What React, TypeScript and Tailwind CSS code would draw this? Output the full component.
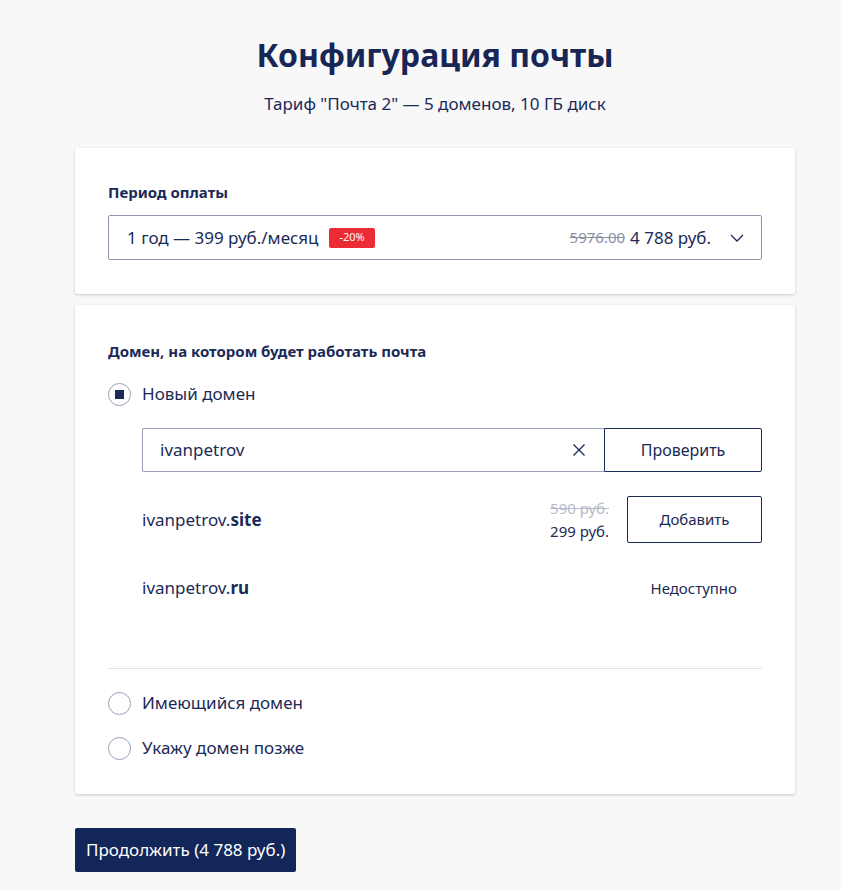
import React, { useState } from 'react';

const font = { fontFamily: '"Noto Sans", "Open Sans", sans-serif' };

function Radio({ checked, label, onClick }: { checked: boolean; label: string; onClick: () => void }) {
  return (
    <button onClick={onClick} className="flex items-center gap-[11px] h-[24px] text-[17px] text-[#1b2a57]">
      <span className="w-[23px] h-[23px] rounded-full border border-[#9aa1b7] bg-white flex items-center justify-center">
        {checked && <span className="w-[9px] h-[9px] bg-[#1b2a57]" />}
      </span>
      <span>{label}</span>
    </button>
  );
}

export default function App() {
  const [mode, setMode] = useState<'new' | 'own' | 'later'>('new');
  const [domain, setDomain] = useState('ivanpetrov');

  return (
    <div style={font} className="min-h-[891px] bg-[#f8f8f9] text-[#1b2a57]">
      <div className="ml-[75px] w-[720px] pt-[33px] pb-[18px]">
        <h1 className="text-center text-[32px] font-bold leading-[44px] text-[#172654]">Конфигурация почты</h1>
        <p className="text-center text-[17px] mt-[15px] leading-[24px]">Тариф "Почта 2" — 5 доменов, 10 ГБ диск</p>

        <div className="mt-[32px] bg-white rounded-[3px] shadow-[0_1px_3px_rgba(20,30,70,0.22)] px-[33px] pt-[34px] pb-[34px]">
          <div className="text-[15px] font-bold leading-[21px]">Период оплаты</div>
          <div className="mt-[12px] h-[45px] border border-[#8e94aa] rounded-[2px] flex items-center pl-[18px] pr-[16px] text-[17px]">
            <span>1 год — 399 руб./месяц</span>
            <span className="ml-[11px] h-[20px] px-[10px] bg-[#ec2c35] text-white text-[11px] rounded-[2px] flex items-center">-20%</span>
            <span className="ml-auto text-[#8a90a3] line-through text-[15px]">5976.00</span>
            <span className="ml-[5px]">4 788 руб.</span>
            <svg className="ml-[18px] w-[16px] h-[16px]" viewBox="0 0 16 16" fill="none" stroke="#1b2a57" strokeWidth="1.3">
              <path d="M2 5l6 6 6-6" />
            </svg>
          </div>
        </div>

        <div className="mt-[11px] bg-white rounded-[3px] shadow-[0_1px_3px_rgba(20,30,70,0.22)] px-[33px] pt-[36px] pb-[34px]">
          <div className="text-[15px] font-bold leading-[21px]">Домен, на котором будет работать почта</div>
          <div className="mt-[20px]">
            <Radio checked={mode === 'new'} label="Новый домен" onClick={() => setMode('new')} />
          </div>

          <div className="ml-[34px]">
            <div className="mt-[22px] flex h-[44px]">
              <div className="flex-1 flex items-center border border-[#9aa1b7] border-r-0 rounded-l-[2px] pl-[17px] pr-[18px]">
                <input
                  value={domain}
                  onChange={(e) => setDomain(e.target.value)}
                  className="flex-1 outline-none text-[17px] text-[#1b2a57] bg-transparent"
                />
                <svg className="w-[14px] h-[14px]" viewBox="0 0 14 14" stroke="#1b2a57" strokeWidth="1.3">
                  <path d="M1.5 1.5l11 11M12.5 1.5l-11 11" />
                </svg>
              </div>
              <button className="w-[158px] border border-[#1b2a57] rounded-r-[2px] text-[16px]">Проверить</button>
            </div>

            <div className="mt-[24px] flex items-center h-[47px]">
              <span className="text-[17px]">ivanpetrov.<b>site</b></span>
              <div className="ml-auto text-right text-[15px] leading-[23px]">
                <div className="text-[#b6bac8] line-through">590 руб.</div>
                <div>299 руб.</div>
              </div>
              <button className="ml-[18px] w-[135px] h-[47px] border border-[#1b2a57] rounded-[2px] text-[15px]">Добавить</button>
            </div>

            <div className="mt-[33px] flex items-center h-[24px]">
              <span className="text-[17px]">ivanpetrov.<b>ru</b></span>
              <span className="ml-auto mr-[25px] text-[15px]">Недоступно</span>
            </div>
          </div>

          <div className="mt-[68px] border-t border-[#e2e4ea]" />

          <div className="mt-[22px] flex flex-col gap-[21px]">
            <Radio checked={mode === 'own'} label="Имеющийся домен" onClick={() => setMode('own')} />
            <Radio checked={mode === 'later'} label="Укажу домен позже" onClick={() => setMode('later')} />
          </div>
        </div>

        <button className="mt-[34px] h-[44px] px-[11px] bg-[#13265a] text-white text-[17px] rounded-[2px]">
          Продолжить (4 788 руб.)
        </button>
      </div>
    </div>
  );
}
